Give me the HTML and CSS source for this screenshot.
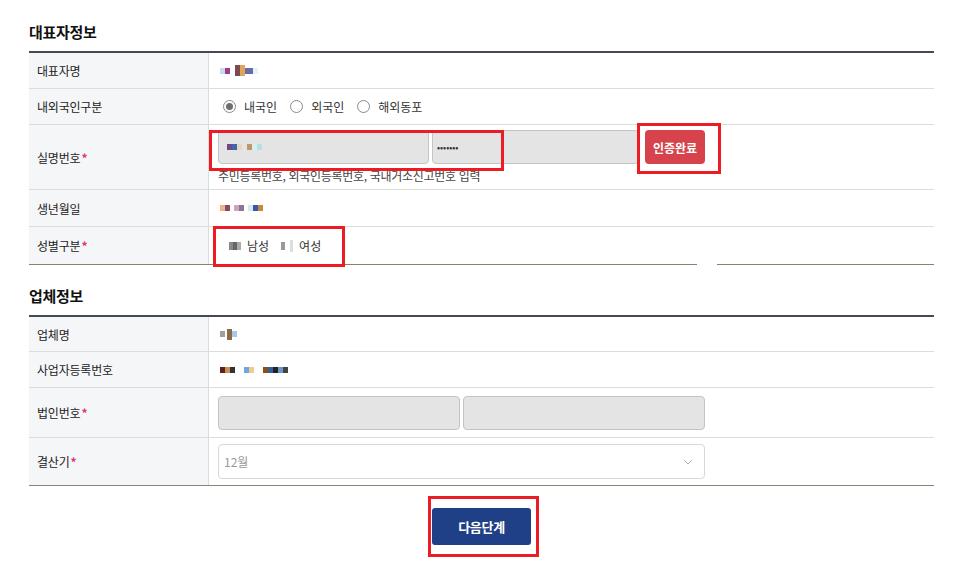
FILE: index.html
```html
<!DOCTYPE html>
<html lang="ko">
<head>
<meta charset="utf-8">
<title>정보 입력</title>
<link rel="stylesheet" href="styles.css">
</head>
<body>
<div class="page">
  <h2 class="sec-title">대표자정보</h2>
  <div class="form-table first">
    <div class="row h36">
      <div class="label">대표자명</div>
      <div class="value">
        <span class="pix">
          <span class="px" style="background:#c9d7ef"></span><span class="px" style="background:#9a3f8c"></span><span class="gap3"></span><span class="px tall" style="background:#7b4a52"></span><span class="px tall" style="background:#e0a35a"></span><span class="px" style="background:#6a6aa8;width:8px"></span><span class="px" style="background:#dff4fb"></span>
        </span>
      </div>
    </div>
    <div class="row h36">
      <div class="label">내외국인구분</div>
      <div class="value">
        <label class="radio"><span class="dot checked"></span>내국인</label>
        <label class="radio"><span class="dot"></span>외국인</label>
        <label class="radio"><span class="dot"></span>해외동포</label>
      </div>
    </div>
    <div class="row h65">
      <div class="label">실명번호<span class="req">*</span></div>
      <div class="value col">
        <div class="inputs">
          <div class="input w211"><span class="pix"><span class="px" style="background:#6c4a8a"></span><span class="px" style="background:#3a68b0"></span><span class="px" style="background:#e6d9c0"></span><span class="gap3"></span><span class="px" style="background:#c09868"></span><span class="px" style="background:#d9eef0"></span><span class="px" style="background:#b8dfe8"></span></span></div>
          <div class="input w207 pw">•••••••</div>
          <button class="btn-red">인증완료</button>
        </div>
        <p class="hint">주민등록번호, 외국인등록번호, 국내거소신고번호 입력</p>
      </div>
    </div>
    <div class="row h37">
      <div class="label">생년월일</div>
      <div class="value">
        <span class="pix"><span class="px" style="background:#f4b088"></span><span class="px" style="background:#8a4868"></span><span class="gap2"></span><span class="px" style="background:#c8a8b8"></span><span class="px" style="background:#8a7898"></span><span class="gap2"></span><span class="px" style="background:#d8e8f0"></span><span class="px" style="background:#3a58a8"></span><span class="px" style="background:#c88838"></span></span>
      </div>
    </div>
    <div class="row h37">
      <div class="label">성별구분<span class="req">*</span></div>
      <div class="value">
        <span class="gender"><span class="gblk"><span class="px" style="background:#888"></span><span class="px" style="background:#666"></span><span class="px" style="background:#aaa"></span></span>남성</span>
        <span class="gender"><span class="gblk"><span class="px" style="background:#999"></span><span class="gap3"></span><span class="px light" style="background:#ddd"></span></span>여성</span>
      </div>
    </div>
    <span class="line-gap"></span>
  </div>

  <h2 class="sec-title second">업체정보</h2>
  <div class="form-table">
    <div class="row h35">
      <div class="label">업체명</div>
      <div class="value">
        <span class="pix"><span class="px" style="background:#a0a0a0"></span><span class="gap1"></span><span class="px tall" style="background:#8a6a48"></span><span class="px" style="background:#a8c8e8"></span></span>
      </div>
    </div>
    <div class="row h36">
      <div class="label">사업자등록번호</div>
      <div class="value">
        <span class="pix"><span class="px" style="background:#5a2020"></span><span class="px" style="background:#c89058"></span><span class="px" style="background:#333"></span><span class="gap4"></span><span class="px" style="background:#6aa8e0"></span><span class="px" style="background:#f4c890"></span><span class="gap4"></span><span class="px" style="background:#8a5018"></span><span class="px" style="background:#3060a0"></span><span class="px" style="background:#222"></span><span class="px" style="background:#6898c8"></span><span class="px" style="background:#444"></span></span>
      </div>
    </div>
    <div class="row h50">
      <div class="label">법인번호<span class="req">*</span></div>
      <div class="value">
        <div class="inputs">
          <div class="input w242"></div>
          <div class="input w242"></div>
        </div>
      </div>
    </div>
    <div class="row h47 last">
      <div class="label">결산기<span class="req">*</span></div>
      <div class="value">
        <div class="select">12월
          <svg class="chev" width="8" height="5" viewBox="0 0 8 5"><path d="M0.5 0.5 L4 4 L7.5 0.5" fill="none" stroke="#aaa" stroke-width="1"/></svg>
        </div>
      </div>
    </div>
  </div>

  <div class="actions">
    <button class="btn-next">다음단계</button>
  </div>

  <span class="mark m1"></span>
  <span class="mark m2"></span>
  <span class="mark m3"></span>
  <span class="mark m4"></span>
</div>
</body>
</html>
```

FILE: styles.css
```css
* { box-sizing: border-box; }
html, body { margin: 0; padding: 0; background: #fff; }
body {
  font-family: "Noto Sans CJK KR", "Noto Sans", "Liberation Sans", sans-serif;
  color: #222;
  font-size: 12px;
}
.page {
  position: relative;
  width: 969px;
  height: 582px;
  padding: 21px 0 0 29px;
}
.sec-title {
  margin: 0 0 8px 0;
  height: 22px;
  line-height: 22px;
  font-size: 15px;
  font-weight: 700;
  color: #111;
  letter-spacing: -0.3px;
}
.sec-title.second { margin-top: 20px; }
.form-table {
  position: relative;
  width: 905px;
  border-top: 2px solid #454a55;
  border-bottom: 1px solid #858570;
}
.row {
  display: grid;
  grid-template-columns: 180px 1fr;
  border-bottom: 1px solid #dcdcdc;
}
.row:last-child, .row.last { border-bottom: none; }
.form-table.first .row:nth-last-child(2) { border-bottom: none; }
.h35 { height: 35px; }
.h36 { height: 36px; }
.h37 { height: 37px; }
.h47 { height: 47px; }
.h50 { height: 50px; }
.h65 { height: 65px; }
.label {
  background: #f5f6f8;
  border-right: 1px solid #dcdcdc;
  display: flex;
  align-items: center;
  padding-left: 8px;
  font-size: 12px;
  color: #222;
  letter-spacing: -0.2px;
}
.req { color: #e0337a; margin-left: 1px; font-weight: 700; }
.value {
  display: flex;
  align-items: center;
  padding-left: 9px;
}
.value.col {
  flex-direction: column;
  align-items: flex-start;
  justify-content: flex-start;
  padding-top: 5px;
}
.pix { display: inline-flex; align-items: center; margin-left: 2px; }
.px { display: inline-block; width: 5px; height: 6px; }
.px.tall { height: 11px; }
.gap1 { width: 2px; }
.gap2 { width: 4px; }
.gap3 { width: 5px; }
.gap4 { width: 9px; }
.radio {
  display: inline-flex;
  align-items: center;
  margin-right: 13px;
  color: #333;
  font-size: 12px;
  margin-left: 5px;
}
.radio + .radio { margin-left: 0; }
.dot {
  width: 13px;
  height: 13px;
  border: 1px solid #8a8a8a;
  border-radius: 50%;
  margin-right: 8px;
  position: relative;
  background: #fff;
}
.dot.checked::after {
  content: "";
  position: absolute;
  left: 2px; top: 2px;
  width: 7px; height: 7px;
  border-radius: 50%;
  background: #6f6f6f;
}
.inputs { display: flex; gap: 3px; align-items: center; }
.input {
  height: 34px;
  background: #e4e4e4;
  border: 1px solid #c4c4c4;
  border-radius: 4px;
  display: flex;
  align-items: center;
  padding-left: 6px;
}
.w211 { width: 211px; }
.w207 { width: 207px; }
.w242 { width: 242px; }
.pw { font-size: 9px; letter-spacing: 0px; color: #333; padding-left: 4px; }
.btn-red {
  margin-left: 3px;
  width: 60px;
  height: 34px;
  background: #d6434d;
  border: none;
  border-radius: 4px;
  color: #fff;
  font-family: inherit;
  font-size: 12px;
  font-weight: 700;
  padding: 0;
}
.hint {
  margin: 4px 0 0 0;
  font-size: 12px;
  color: #444;
  letter-spacing: -0.3px;
  line-height: 16px;
}
.gender {
  display: inline-flex;
  align-items: center;
  margin-left: 11px;
  margin-right: 1px;
  color: #333;
}
.gblk { display: inline-flex; align-items: center; margin-right: 6px; }
.gblk .px { width: 4px; height: 8px; }
.gblk .px.light { width: 3px; height: 12px; }
.line-gap {
  position: absolute;
  left: 668px;
  bottom: -1px;
  width: 20px;
  height: 1px;
  background: #fff;
}
.select {
  position: relative;
  width: 487px;
  height: 35px;
  border: 1px solid #d8d8d8;
  border-radius: 4px;
  display: flex;
  align-items: center;
  padding-left: 5px;
  color: #999;
  font-size: 12px;
}
.chev { position: absolute; right: 12px; top: 15px; }
.actions {
  display: flex;
  justify-content: flex-start;
  padding-left: 403px;
  margin-top: 22px;
}
.btn-next {
  width: 99px;
  height: 37px;
  background: #1f3f87;
  color: #fff;
  border: none;
  border-radius: 3px;
  font-family: inherit;
  font-size: 13px;
  font-weight: 700;
  padding: 0;
  letter-spacing: -0.3px;
}
.mark {
  position: absolute;
  border: 3px solid #ec1c24;
}
.m1 { left: 209px; top: 130px; width: 295px; height: 41px; }
.m2 { left: 637px; top: 123px; width: 84px; height: 51px; }
.m3 { left: 213px; top: 226px; width: 132px; height: 41px; }
.m4 { left: 428px; top: 496px; width: 111px; height: 61px; }
```
